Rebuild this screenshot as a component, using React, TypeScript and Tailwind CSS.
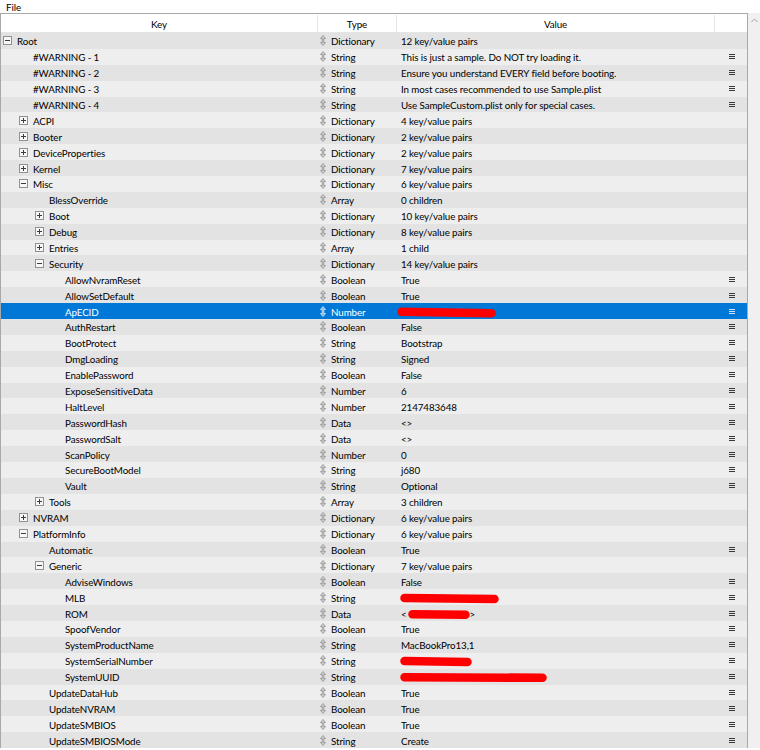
import React from "react";

type Row = {
  level: number;
  exp?: "+" | "-";
  key: string;
  type: string;
  value?: string;
  redact?: "apecid" | "mlb" | "rom" | "serial" | "uuid";
  leaf?: boolean;
};

const rows: Row[] = [
  { level: 0, exp: "-", key: "Root", type: "Dictionary", value: "12 key/value pairs" },
  { level: 1, key: "#WARNING - 1", type: "String", value: "This is just a sample. Do NOT try loading it.", leaf: true },
  { level: 1, key: "#WARNING - 2", type: "String", value: "Ensure you understand EVERY field before booting.", leaf: true },
  { level: 1, key: "#WARNING - 3", type: "String", value: "In most cases recommended to use Sample.plist", leaf: true },
  { level: 1, key: "#WARNING - 4", type: "String", value: "Use SampleCustom.plist only for special cases.", leaf: true },
  { level: 1, exp: "+", key: "ACPI", type: "Dictionary", value: "4 key/value pairs" },
  { level: 1, exp: "+", key: "Booter", type: "Dictionary", value: "2 key/value pairs" },
  { level: 1, exp: "+", key: "DeviceProperties", type: "Dictionary", value: "2 key/value pairs" },
  { level: 1, exp: "+", key: "Kernel", type: "Dictionary", value: "7 key/value pairs" },
  { level: 1, exp: "-", key: "Misc", type: "Dictionary", value: "6 key/value pairs" },
  { level: 2, key: "BlessOverride", type: "Array", value: "0 children" },
  { level: 2, exp: "+", key: "Boot", type: "Dictionary", value: "10 key/value pairs" },
  { level: 2, exp: "+", key: "Debug", type: "Dictionary", value: "8 key/value pairs" },
  { level: 2, exp: "+", key: "Entries", type: "Array", value: "1 child" },
  { level: 2, exp: "-", key: "Security", type: "Dictionary", value: "14 key/value pairs" },
  { level: 3, key: "AllowNvramReset", type: "Boolean", value: "True", leaf: true },
  { level: 3, key: "AllowSetDefault", type: "Boolean", value: "True", leaf: true },
  { level: 3, key: "ApECID", type: "Number", redact: "apecid", leaf: true },
  { level: 3, key: "AuthRestart", type: "Boolean", value: "False", leaf: true },
  { level: 3, key: "BootProtect", type: "String", value: "Bootstrap", leaf: true },
  { level: 3, key: "DmgLoading", type: "String", value: "Signed", leaf: true },
  { level: 3, key: "EnablePassword", type: "Boolean", value: "False", leaf: true },
  { level: 3, key: "ExposeSensitiveData", type: "Number", value: "6", leaf: true },
  { level: 3, key: "HaltLevel", type: "Number", value: "2147483648", leaf: true },
  { level: 3, key: "PasswordHash", type: "Data", value: "<>", leaf: true },
  { level: 3, key: "PasswordSalt", type: "Data", value: "<>", leaf: true },
  { level: 3, key: "ScanPolicy", type: "Number", value: "0", leaf: true },
  { level: 3, key: "SecureBootModel", type: "String", value: "j680", leaf: true },
  { level: 3, key: "Vault", type: "String", value: "Optional", leaf: true },
  { level: 2, exp: "+", key: "Tools", type: "Array", value: "3 children" },
  { level: 1, exp: "+", key: "NVRAM", type: "Dictionary", value: "6 key/value pairs" },
  { level: 1, exp: "-", key: "PlatformInfo", type: "Dictionary", value: "6 key/value pairs" },
  { level: 2, key: "Automatic", type: "Boolean", value: "True", leaf: true },
  { level: 2, exp: "-", key: "Generic", type: "Dictionary", value: "7 key/value pairs" },
  { level: 3, key: "AdviseWindows", type: "Boolean", value: "False", leaf: true },
  { level: 3, key: "MLB", type: "String", redact: "mlb", leaf: true },
  { level: 3, key: "ROM", type: "Data", redact: "rom", leaf: true },
  { level: 3, key: "SpoofVendor", type: "Boolean", value: "True", leaf: true },
  { level: 3, key: "SystemProductName", type: "String", value: "MacBookPro13,1", leaf: true },
  { level: 3, key: "SystemSerialNumber", type: "String", redact: "serial", leaf: true },
  { level: 3, key: "SystemUUID", type: "String", redact: "uuid", leaf: true },
  { level: 2, key: "UpdateDataHub", type: "Boolean", value: "True", leaf: true },
  { level: 2, key: "UpdateNVRAM", type: "Boolean", value: "True", leaf: true },
  { level: 2, key: "UpdateSMBIOS", type: "Boolean", value: "True", leaf: true },
  { level: 2, key: "UpdateSMBIOSMode", type: "String", value: "Create", leaf: true },
];

const SELECTED = 17;

function Expander({ sign }: { sign: "+" | "-" }) {
  return (
    <svg width="9" height="9" viewBox="0 0 9 9" className="shrink-0">
      <rect x="0.5" y="0.5" width="8" height="8" fill="#f7f7f7" stroke="#919191" />
      <line x1="2" y1="4.5" x2="7" y2="4.5" stroke="#3c3c3c" />
      {sign === "+" && <line x1="4.5" y1="2" x2="4.5" y2="7" stroke="#3c3c3c" />}
    </svg>
  );
}

function UpDown({ light }: { light: boolean }) {
  return (
    <svg width="6" height="11" viewBox="0 0 6 11" className="shrink-0">
      <path
        d="M3 0.5 L5.5 3.5 L3.8 3.5 L3.8 7.5 L5.5 7.5 L3 10.5 L0.5 7.5 L2.2 7.5 L2.2 3.5 L0.5 3.5 Z"
        fill={light ? "#7fb4e8" : "#cfcfcf"}
        stroke={light ? "#d6e6f7" : "#8f8f8f"}
        strokeWidth="0.8"
        strokeLinejoin="round"
      />
    </svg>
  );
}

function Menu({ light }: { light: boolean }) {
  const c = light ? "#cfe2f7" : "#3a3a3a";
  return (
    <svg width="6" height="5" viewBox="0 0 6 5">
      <rect x="0" y="0" width="6" height="1" fill={c} />
      <rect x="0" y="2" width="6" height="1" fill={c} />
      <rect x="0" y="4" width="6" height="1" fill={c} />
    </svg>
  );
}

function Redact({ width, slope = 0 }: { width: number; slope?: number }) {
  return (
    <svg width={width} height="13" viewBox={`0 0 ${width} 13`} className="shrink-0">
      <path
        d={`M4.5 ${6.5 - slope / 2} L${width - 4.5} ${6.5 + slope / 2}`}
        stroke="#ff0000"
        strokeWidth="8.5"
        strokeLinecap="round"
        fill="none"
      />
    </svg>
  );
}

function Value({ r }: { r: Row }) {
  if (r.redact === "apecid") return <span className="-ml-[4px] flex items-center"><Redact width={99} slope={1.5} /></span>;
  if (r.redact === "mlb") return <span className="-ml-[1px] flex items-center"><Redact width={99} slope={1} /></span>;
  if (r.redact === "serial") return <span className="-ml-[1px] flex items-center"><Redact width={72} slope={1} /></span>;
  if (r.redact === "uuid") return <span className="-ml-[1px] flex items-center"><Redact width={147} slope={0.5} /></span>;
  if (r.redact === "rom")
    return (
      <span className="flex items-center">
        <span>&lt;</span>
        <span className="ml-[1px] flex items-center"><Redact width={62} slope={0.5} /></span>
        <span>&gt;</span>
      </span>
    );
  return <span className="whitespace-nowrap">{r.value}</span>;
}

export default function App() {
  return (
    <div
      className="h-[750px] w-[760px] overflow-hidden bg-white text-[9.8px] tracking-[-0.1px] text-black"
      style={{ fontFamily: 'Lato, "Noto Sans", "Liberation Sans", sans-serif' }}
    >
      <div className="flex h-[13px] items-center pl-[6px] pt-[1px] leading-[12px]">File</div>
      <div className="flex">
        <div className="w-[748px] border-l border-r border-t border-[#a9a9a9]">
          <div className="grid h-[19px] grid-cols-[317px_79px_318px_32px] border-b border-[#e5e5e5] bg-white pt-[1px] leading-[18px]">
            <div className="border-r border-[#e5e5e5] text-center">Key</div>
            <div className="border-r border-[#e5e5e5] text-center">Type</div>
            <div className="border-r border-[#e5e5e5] text-center">Value</div>
            <div></div>
          </div>
          {rows.map((r, i) => {
            const sel = i === SELECTED;
            const bg = sel ? "bg-[#0078d7] text-white" : i % 2 === 0 ? "bg-[#e3e3e3]" : "bg-[#eeeeee]";
            return (
              <div key={i} className={`grid h-[15.9px] grid-cols-[317px_79px_318px_32px] items-center leading-[13px] ${bg}`}>
                <div className="flex items-center" style={{ paddingLeft: 2 + 16 * r.level }}>
                  {r.exp ? <Expander sign={r.exp} /> : <span className="w-[9px] shrink-0" />}
                  <span className="ml-[5px] whitespace-nowrap pt-[2px]">{r.key}</span>
                </div>
                <div className="flex items-center pl-[2px]">
                  <UpDown light={sel} />
                  <span className="ml-[5px] pt-[2px]">{r.type}</span>
                </div>
                <div className="flex items-center pl-[4px]">
                  <span className="pt-[2px]">
                    <Value r={r} />
                  </span>
                </div>
                <div className="flex items-center pl-[14px]">
                  {r.leaf && <Menu light={sel} />}
                </div>
              </div>
            );
          })}
        </div>
        <div className="flex w-[12px] justify-center bg-[#f0f0f0] pt-[5px]">
          <svg width="7" height="5" viewBox="0 0 7 5">
            <path d="M0.5 4 L3.5 1 L6.5 4" stroke="#a3a3a3" fill="none" strokeWidth="1" />
          </svg>
        </div>
      </div>
    </div>
  );
}
